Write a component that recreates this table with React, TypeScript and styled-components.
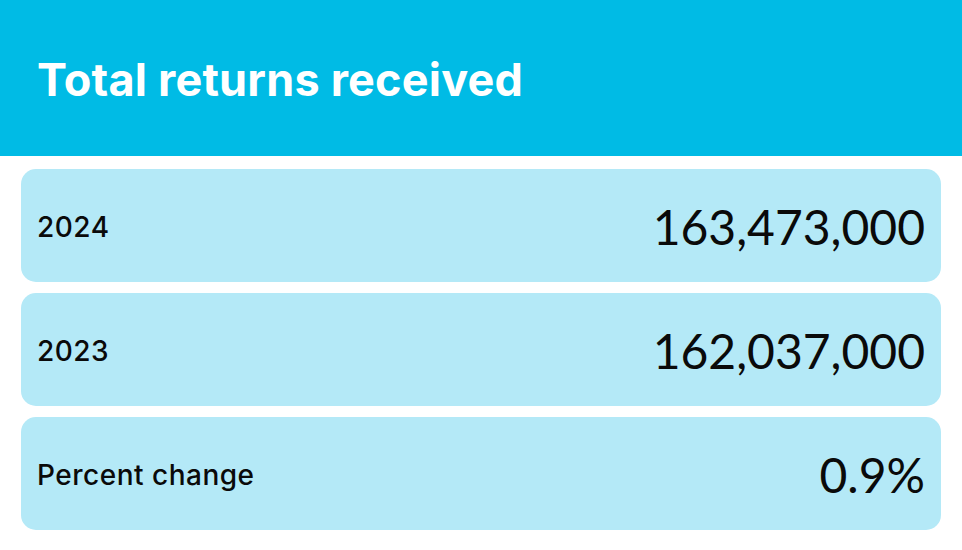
import React from 'react'
import styled, { createGlobalStyle } from 'styled-components'

const GlobalStyle = createGlobalStyle`
  html, body {
    margin: 0;
    padding: 0;
    background: #ffffff;
  }
  body {
    font-family: Inter, 'Noto Sans', sans-serif;
    color: #0a0a0a;
  }
`

interface IStat {
  label: string
  value: string
}

const stats: IStat[] = [
  { label: '2024', value: '163,473,000' },
  { label: '2023', value: '162,037,000' },
  { label: 'Percent change', value: '0.9%' },
]

const App: React.FC = () => {
  return (
    <>
      <GlobalStyle />
      <Wrapper>
        <Header>
          <Title>Total returns received</Title>
        </Header>
        <List>
          {stats.map((s) => (
            <Row key={s.label}>
              <Label>{s.label}</Label>
              <Value>{s.value}</Value>
            </Row>
          ))}
        </List>
      </Wrapper>
    </>
  )
}

export default App

const Wrapper = styled.div`
  width: 962px;
  height: 550px;
  display: flex;
  flex-direction: column;
  overflow: hidden;
`

const Header = styled.header`
  height: 156px;
  background-color: #00bbe5;
  display: flex;
  align-items: center;
  padding: 0 37px;
  box-sizing: border-box;
`

const Title = styled.h1`
  margin: 0;
  margin-top: 2px;
  color: #ffffff;
  font-family: Inter, 'Noto Sans', sans-serif;
  font-weight: 700;
  font-size: 45px;
  letter-spacing: 0.2px;
`

const List = styled.div`
  display: flex;
  flex-direction: column;
  gap: 11px;
  padding: 13px 21px 0 21px;
`

const Row = styled.div`
  height: 113px;
  background-color: #b4e9f7;
  border-radius: 15px;
  display: flex;
  align-items: center;
  justify-content: space-between;
  padding: 0 16px 0 16px;
  box-sizing: border-box;
`

const Label = styled.span`
  font-family: Inter, 'Noto Sans', sans-serif;
  font-size: 28px;
  font-weight: 500;
  letter-spacing: 0.5px;
  margin-top: 2px;
`

const Value = styled.span`
  font-family: Lato, 'Noto Sans', sans-serif;
  font-size: 48px;
  font-weight: 400;
  margin-top: 2px;
`
